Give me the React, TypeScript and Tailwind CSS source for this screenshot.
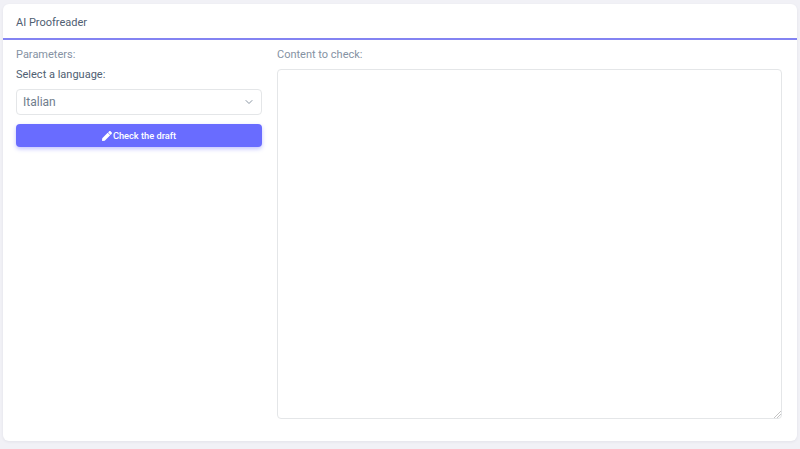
import { ChevronDown } from "lucide-react";
import { FaPen } from "react-icons/fa";

export default function App() {
  return (
    <div className="h-[449px] overflow-hidden bg-[#f1f1f6] px-[3px] pt-[4px] font-['Roboto',sans-serif]">
      <div className="h-[437px] rounded-[6px] bg-white shadow-[0_1px_3px_rgba(60,60,90,0.08)]">
        {/* Header */}
        <div className="flex h-[36px] items-center border-b-2 border-[#8383f2] pl-[13px] pt-[5px]">
          <h1 className="text-[11px] text-[#4f6072]">AI Proofreader</h1>
        </div>

        <div className="flex gap-[15px] pl-[13px] pr-[15px] pt-[7px]">
          {/* Parameters */}
          <div className="w-[246px]">
            <p className="text-[11px] leading-[16px] text-[#8592a3]">Parameters:</p>
            <label className="mt-[4px] block text-[11px] leading-[16px] text-[#4f6072]">
              Select a language:
            </label>
            <div className="relative mt-[6px]">
              <select className="h-[26px] w-full appearance-none rounded-[4px] border border-[#e4e6e8] bg-white px-[6px] text-[12px] text-[#6f7d8c] outline-none">
                <option>Italian</option>
              </select>
              <ChevronDown className="pointer-events-none absolute right-[7px] top-[7px] h-[12px] w-[12px] text-[#8a96a3]" />
            </div>
            <button className="mt-[9px] flex h-[23px] w-full items-center justify-center gap-[1px] rounded-[4px] bg-[#696cff] text-[9.25px] font-medium text-white shadow-[0_2px_4px_rgba(105,108,255,0.4)]">
              <FaPen className="h-[10px] w-[10px]" />
              Check the draft
            </button>
          </div>

          {/* Content */}
          <div className="flex-1">
            <p className="text-[11px] leading-[16px] text-[#8592a3]">Content to check:</p>
            <textarea className="mt-[6px] block h-[350px] w-full rounded-[4px] border border-[#e4e6e8] bg-white outline-none [&::-webkit-resizer]:bg-[linear-gradient(135deg,transparent_74%,#c4c4c4_74%,#c4c4c4_79%,transparent_79%,transparent_84%,#c4c4c4_84%,#c4c4c4_89%,transparent_89%)]" />
          </div>
        </div>
      </div>
    </div>
  );
}
